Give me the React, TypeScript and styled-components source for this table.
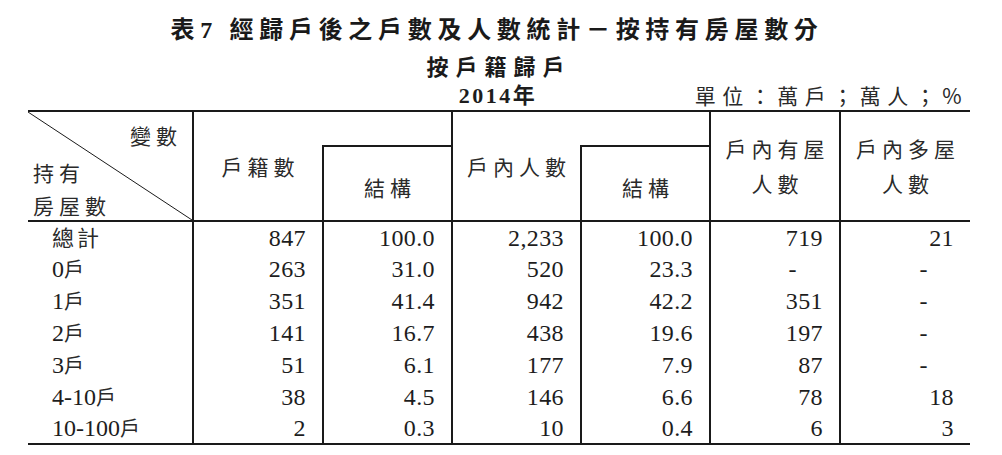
import React from 'react';
import styled, { createGlobalStyle } from 'styled-components';

const Global = createGlobalStyle`
  html, body { margin: 0; padding: 0; background: #fff; }
  body { width: 1002px; height: 455px; overflow: hidden; }
`;

const Page = styled.div`
  width: 1002px;
  box-sizing: border-box;
  padding: 15px 32px 0 28px;
  color: #1d1d1d;
  font-family: "Liberation Serif", "Noto Sans CJK TC", serif;
`;

const Title = styled.h1`
  margin: 0;
  padding-right: 4px;
  text-align: center;
  font-family: "Liberation Serif", "Noto Sans CJK TC", serif;
  font-size: 24px;
  font-weight: 700;
  line-height: 30px;
  letter-spacing: 5.7px;
  color: #1a1a1a;
`;

const Subtitle = styled.h2`
  margin: 5px 0 0;
  padding-right: 0;
  text-align: center;
  font-family: "Noto Sans CJK TC", sans-serif;
  font-size: 22px;
  font-weight: 700;
  line-height: 30px;
  letter-spacing: 7px;
  color: #1a1a1a;
`;

const MetaRow = styled.div`
  display: grid;
  grid-template-columns: 1fr auto 1fr;
  align-items: center;
  height: 29px;
  margin-top: 1px;
`;

const Year = styled.div`
  grid-column: 2;
  padding-right: 2px;
  font-family: "Liberation Serif", "Noto Sans CJK TC", serif;
  font-size: 22px;
  font-weight: 700;
  line-height: 29px;
  letter-spacing: 2.5px;
`;

const Unit = styled.div`
  grid-column: 3;
  justify-self: end;
  padding-right: 2px;
  font-family: "Noto Sans CJK TC", "Liberation Serif", sans-serif;
  font-size: 21px;
  line-height: 29px;
  letter-spacing: 6.5px;
  color: #2a2a2a;
`;

const Table = styled.table`
  width: 942px;
  border-collapse: collapse;
  table-layout: fixed;
  border-top: 2px solid #1a1a1a;
  border-bottom: 2px solid #1a1a1a;
`;

const HeadRow = styled.tr<{ $h: number }>`
  height: ${(p) => p.$h}px;
`;

const HeadCell = styled.th<{ $left?: boolean; $top?: boolean; $padTop?: number }>`
  padding: ${(p) => p.$padTop ?? 0}px 0 0 5px;
  font-family: "Noto Sans CJK TC", sans-serif;
  font-size: 21px;
  font-weight: 400;
  line-height: 35px;
  letter-spacing: 5px;
  text-align: center;
  vertical-align: middle;
  color: #2a2a2a;
  border-left: ${(p) => (p.$left ? '2px solid #1a1a1a' : 'none')};
  border-top: ${(p) => (p.$top ? '2px solid #1a1a1a' : 'none')};
`;

const CornerCell = styled.th`
  padding: 0;
  vertical-align: top;
`;

const CornerInner = styled.div`
  position: relative;
  height: 108px;
  font-family: "Noto Sans CJK TC", sans-serif;
  font-size: 21px;
  font-weight: 400;
  letter-spacing: 5px;
  color: #2a2a2a;
  padding-top: 5px;
  box-sizing: border-box;
`;

const Diagonal = styled.svg`
  position: absolute;
  inset: 0;
  width: 100%;
  height: 100%;
`;

const CornerLine = styled.div<{ $h: number; $right?: boolean }>`
  height: ${(p) => p.$h}px;
  line-height: ${(p) => p.$h}px;
  text-align: ${(p) => (p.$right ? 'right' : 'left')};
  padding: ${(p) => (p.$right ? '0 10px 0 0' : '0 0 0 5px')};
`;

const BodyRow = styled.tr<{ $last?: boolean }>`
  height: ${(p) => (p.$last ? 31 : 32)}px;
`;

const Label = styled.td`
  padding: 0 0 0 24px;
  font-size: 24px;
  line-height: 24px;
  white-space: nowrap;
  text-align: left;
  vertical-align: middle;
`;

const Han = styled.span<{ $size: number }>`
  font-family: "Noto Sans CJK TC", sans-serif;
  font-size: ${(p) => p.$size}px;
  line-height: 20px;
  letter-spacing: 3px;
  color: #2a2a2a;
`;

const Num = styled.td<{ $dash?: boolean }>`
  padding: 0 ${(p) => (p.$dash ? 42 : 16)}px 0 0;
  border-left: 2px solid #1a1a1a;
  font-size: 24px;
  line-height: 24px;
  letter-spacing: 0.4px;
  text-align: right;
  vertical-align: middle;
  white-space: nowrap;
`;

const Body = styled.tbody`
  border-top: 2px solid #1a1a1a;
`;

const rows: [string, string, string[]][] = [
  ['', '總計', ['847', '100.0', '2,233', '100.0', '719', '21']],
  ['0', '戶', ['263', '31.0', '520', '23.3', '-', '-']],
  ['1', '戶', ['351', '41.4', '942', '42.2', '351', '-']],
  ['2', '戶', ['141', '16.7', '438', '19.6', '197', '-']],
  ['3', '戶', ['51', '6.1', '177', '7.9', '87', '-']],
  ['4-10', '戶', ['38', '4.5', '146', '6.6', '78', '18']],
  ['10-100', '戶', ['2', '0.3', '10', '0.4', '6', '3']],
];

const widths = [165, 130, 129, 129, 129, 130, 130];

export default function App() {
  return (
    <>
      <Global />
      <Page>
        <Title>表7 經歸戶後之戶數及人數統計－按持有房屋數分</Title>
        <Subtitle>按戶籍歸戶</Subtitle>
        <MetaRow>
          <Year>2014年</Year>
          <Unit>單位：萬戶；萬人；%</Unit>
        </MetaRow>
        <Table>
          <colgroup>
            {widths.map((w, i) => (
              <col key={i} style={{ width: w }} />
            ))}
          </colgroup>
          <thead>
            <HeadRow $h={35}>
              <CornerCell rowSpan={2}>
                <CornerInner>
                  <Diagonal viewBox="0 0 100 100" preserveAspectRatio="none">
                    <line x1="0" y1="0" x2="100" y2="100" stroke="#1a1a1a" strokeWidth="1" vectorEffect="non-scaling-stroke" />
                  </Diagonal>
                  <CornerLine $h={36} $right>變數</CornerLine>
                  <CornerLine $h={38}>持有</CornerLine>
                  <CornerLine $h={28}>房屋數</CornerLine>
                </CornerInner>
              </CornerCell>
              <HeadCell rowSpan={2} $left>戶籍數</HeadCell>
              <HeadCell />
              <HeadCell rowSpan={2} $left>戶內人數</HeadCell>
              <HeadCell />
              <HeadCell rowSpan={2} $left>
                戶內有屋
                <br />
                人數
              </HeadCell>
              <HeadCell rowSpan={2} $left>
                戶內多屋
                <br />
                人數
              </HeadCell>
            </HeadRow>
            <HeadRow $h={75}>
              <HeadCell $left $top $padTop={8}>結構</HeadCell>
              <HeadCell $left $top $padTop={8}>結構</HeadCell>
            </HeadRow>
          </thead>
          <Body>
            {rows.map(([num, han, vals], i) => (
              <BodyRow key={i} $last={i === rows.length - 1}>
                <Label>
                  {num}
                  <Han $size={num ? 20 : 22}>{han}</Han>
                </Label>
                {vals.map((v, j) => (
                  <Num key={j} $dash={v === '-'}>
                    {v}
                  </Num>
                ))}
              </BodyRow>
            ))}
          </Body>
        </Table>
      </Page>
    </>
  );
}
